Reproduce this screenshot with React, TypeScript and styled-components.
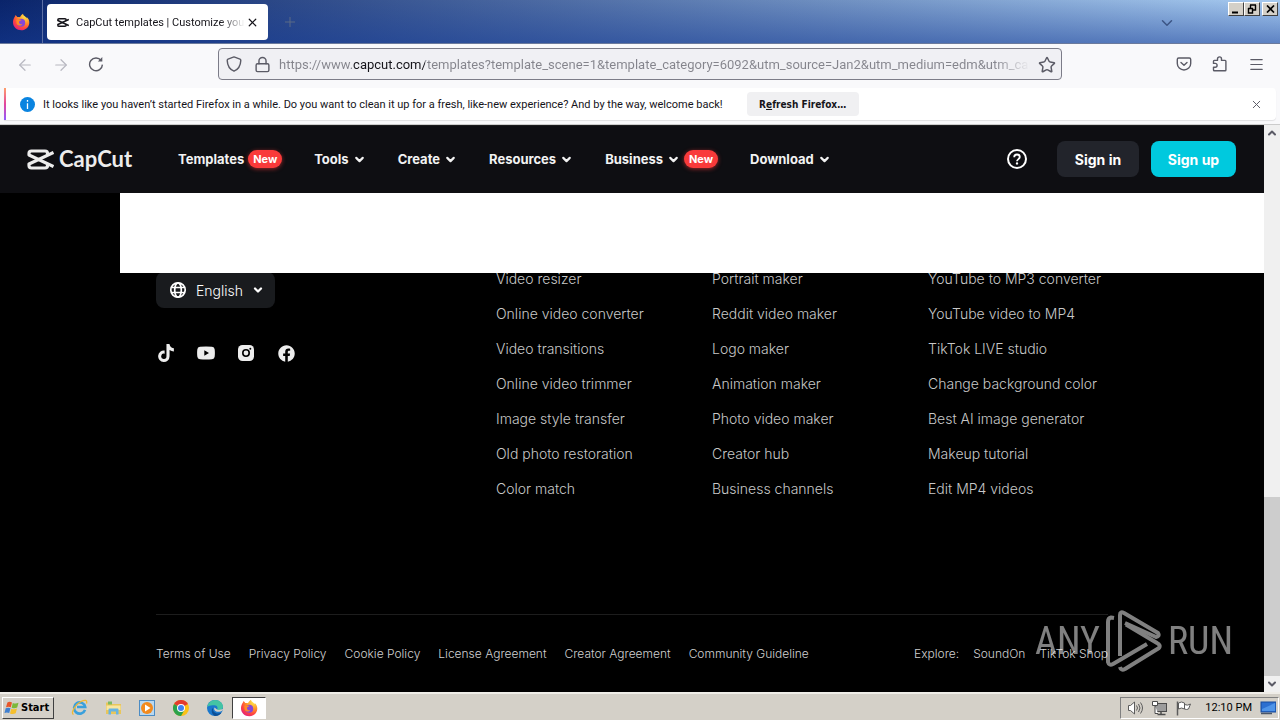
import React from "react";
import styled, { createGlobalStyle, css } from "styled-components";
import { ArrowLeft, ArrowRight, ChevronDown, ChevronUp, Lock, Menu, Plus, Star, X } from "lucide-react";
import { FaFacebook, FaTiktok } from "react-icons/fa";

const ui = `Roboto, "DejaVu Sans Condensed", sans-serif`;
const uiBold = `"DejaVu Sans Condensed", "DejaVu Sans", sans-serif`;
const site = `Inter, "Liberation Sans", sans-serif`;

const Global = createGlobalStyle`
  *, *::before, *::after { box-sizing: border-box; }
  body { margin: 0; background: #000; }
  button, input { font: inherit; color: inherit; border: 0; padding: 0; margin: 0; background: none; }
  button { cursor: pointer; }
  a { color: inherit; text-decoration: none; }
  ul { list-style: none; margin: 0; padding: 0; }
  svg { display: block; flex: none; }
`;

const Screen = styled.div`
  min-height: 100vh;
  display: flex;
  flex-direction: column;
  font-family: ${ui};
`;

/* Browser chrome */

const TitleBar = styled.div`
  height: 44px;
  display: flex;
  border-bottom: 1px solid #6b7a9c;
  background:
    linear-gradient(to bottom, rgba(22, 60, 150, 0) 0%, rgba(22, 60, 150, 0.5) 100%),
    linear-gradient(to right, #0a246a, #a6caf0);
`;

const PinnedTab = styled.button`
  width: 43px;
  display: grid;
  place-items: center;
  border-right: 1px solid #5c6fa5;
`;

const Tab = styled.div`
  width: 221px;
  height: 36px;
  margin: 4px 0 0 4px;
  padding: 0 10px;
  display: flex;
  align-items: center;
  gap: 7px;
  border-radius: 4px;
  background: #fff;
  color: #15141a;
  font-size: 11px;
`;

const TabTitle = styled.span`
  flex: 1;
  margin-right: -6px;
  overflow: hidden;
  white-space: nowrap;
  mask-image: linear-gradient(to right, #000 85%, transparent);
`;

const BarButton = styled.button<{ $color?: string; $size?: number }>`
  width: ${(p) => p.$size ?? 16}px;
  height: ${(p) => p.$size ?? 16}px;
  display: grid;
  place-items: center;
  flex: none;
  color: ${(p) => p.$color ?? "#5b5b66"};
`;

const TitleTools = styled.div`
  flex: 1;
  display: flex;
  align-items: center;
  justify-content: space-between;
  padding: 0 54px 0 14px;
`;

const WindowControls = styled.div`
  display: flex;
  padding: 2px 2px 0 0;
`;

const raised = css`
  background: #d4d0c8;
  border: 1px solid;
  border-color: #fff #404040 #404040 #fff;
`;

const WindowButton = styled.button<{ $gap?: boolean }>`
  ${raised}
  width: 16px;
  height: 14px;
  margin-left: ${(p) => (p.$gap ? 2 : 0)}px;
  display: grid;
  place-items: center;
  color: #000;
`;

const Toolbar = styled.div`
  height: 44px;
  display: flex;
  align-items: center;
  padding: 0 16px 4px;
  background: #f9f9fb;
`;

const ToolGroup = styled.div<{ $gap: number }>`
  display: flex;
  flex: 1;
  align-items: center;
  gap: ${(p) => p.$gap}px;
  &:last-child { justify-content: flex-end; }
`;

const AddressBar = styled.div`
  width: calc(100% - 404px);
  height: 32px;
  display: flex;
  align-items: center;
  gap: 12px;
  padding: 0 7px;
  border: 1px solid #7c7c88;
  border-radius: 4px;
  background: #f0f0f4;
  color: #5b5b66;
`;

const UrlInput = styled.input`
  flex: 1;
  min-width: 0;
  height: 30px;
  margin-left: -3px;
  margin-right: -4px;
  font-size: 13px;
  color: transparent;
  background: linear-gradient(
    to right,
    #84848c 74px,
    #15141a 74px,
    #15141a 146px,
    #84848c 146px,
    #84848c calc(100% - 36px),
    transparent
  );
  background-clip: text;
  -webkit-background-clip: text;
`;

const NoticeArea = styled.div`
  padding: 0 4px 4px;
  border-bottom: 1px solid #ccc;
  background: #f9f9fb;
`;

const Notice = styled.div`
  position: relative;
  height: 32px;
  display: flex;
  align-items: center;
  padding: 0 12px 0 16px;
  border-radius: 0 4px 4px 0;
  overflow: hidden;
  background: #fff;
  color: #15141a;
  font-size: 11px;
  box-shadow: 0 1px 1px rgba(0, 0, 0, 0.1);
  &::before {
    content: "";
    position: absolute;
    inset: 0 auto 0 0;
    width: 2px;
    background: linear-gradient(#ff9f6b, #e3459c 50%, #9059ff);
  }
`;

const NoticeText = styled.span`
  margin: 0 24px 0 8px;
  white-space: nowrap;
`;

const RefreshButton = styled.button`
  width: 112px;
  height: 24px;
  margin-right: auto;
  border-radius: 4px;
  background: #f0f0f2;
  font-family: ${uiBold};
  font-size: 10px;
  font-weight: 700;
`;

/* Web page */

const Viewport = styled.div`
  flex: 1;
  display: flex;
  background: #000;
`;

const Page = styled.div`
  position: relative;
  flex: 1;
  min-width: 0;
  font-family: ${site};
  color: #fff;
`;

const Header = styled.header`
  height: 68px;
  display: flex;
  align-items: center;
  padding: 0 28px 0 27px;
  box-shadow: inset 0 1px #1b1b1c;
  background: #0e0e12;
`;

const Brand = styled.a`
  width: 151px;
  display: flex;
  align-items: center;
  gap: 5px;
  color: #ececec;
  font-family: Lato, sans-serif;
  font-size: 22px;
  line-height: 24px;
  font-weight: 700;
`;

const Nav = styled.nav`
  flex: 1;
  display: flex;
  gap: 32px;
`;

const NavItem = styled.button`
  display: flex;
  align-items: center;
  gap: 4px;
  color: #f2f2f2;
  font-size: 13px;
  line-height: 20px;
  font-weight: 700;
`;

const Badge = styled.span`
  width: 34px;
  height: 18px;
  border-radius: 9px;
  background: #f93a3a;
  box-shadow: 0 1px 4px rgba(249, 58, 58, 0.6);
  color: #fff;
  font-size: 11px;
  line-height: 18px;
  text-align: center;
`;

const Actions = styled.div`
  display: flex;
  align-items: center;
  gap: 12px;
`;

const HelpButton = styled.button`
  margin-right: 18px;
`;

const SignButton = styled.button<{ $primary?: boolean }>`
  width: ${(p) => (p.$primary ? 85 : 82)}px;
  height: 36px;
  border-radius: 8px;
  background: ${(p) => (p.$primary ? "#00c9de" : "#22242b")};
  font-size: 14px;
  font-weight: 700;
`;

const Blank = styled.div`
  position: relative;
  height: 80px;
  margin-left: 120px;
  background: #fff;
`;

const Footer = styled.footer`
  margin: -4px 156px 0;
`;

const FooterTop = styled.div`
  display: grid;
  grid-template-columns: 340px 216px 216px 1fr;
  padding-bottom: 115px;
`;

const FooterBrand = styled.div`
  padding-top: 3px;
`;

const Language = styled.button`
  width: 119px;
  height: 36px;
  display: flex;
  align-items: center;
  gap: 9px;
  padding: 0 13px;
  border-radius: 8px;
  background: #191b1e;
  font-size: 14px;
  font-weight: 300;
`;

const Social = styled.div`
  display: flex;
  gap: 20px;
  margin-top: 35px;
  color: #ededed;
`;

const SocialLink = styled.a`
  width: 20px;
  height: 20px;
  display: grid;
  place-items: center;
`;

const LinkList = styled.ul`
  display: flex;
  flex-direction: column;
  gap: 15px;
  color: #c8c8c8;
  font-size: 14px;
  line-height: 20px;
  font-weight: 300;
  white-space: nowrap;
`;

const Legal = styled.div`
  display: flex;
  justify-content: space-between;
  padding: 29px 0 28px;
  border-top: 1px solid #1d1d1d;
  color: #d0d0d0;
  font-size: 12px;
  line-height: 20px;
  font-weight: 300;
  white-space: nowrap;
`;

const LegalGroup = styled.div<{ $gap: number }>`
  display: flex;
  gap: ${(p) => p.$gap}px;
`;

const Watermark = styled.div`
  position: absolute;
  right: 31px;
  bottom: 20px;
  height: 62px;
  display: flex;
  align-items: center;
  gap: 6px;
  color: #fff;
  opacity: 0.5;
  font-family: "Roboto Condensed", Roboto, sans-serif;
  font-size: 38px;
  font-weight: 400;
`;

const Scrollbar = styled.div`
  width: 16px;
  display: flex;
  flex-direction: column;
  background: #f0f0f0;
`;

const Thumb = styled.div`
  height: 179px;
  margin-top: auto;
  background: #cdcdcd;
`;

/* Desktop taskbar */

const Taskbar = styled.div`
  height: 28px;
  display: flex;
  align-items: center;
  padding: 1px 1px 0 2px;
  border-top: 2px solid #efede8;
  background: #d4d0c8;
  color: #000;
  font-size: 11px;
`;

const StartButton = styled.button`
  ${raised}
  width: 52px;
  height: 22px;
  display: flex;
  align-items: center;
  gap: 1px;
  padding-left: 1px;
  margin-right: 8px;
  font-family: ${uiBold};
  font-weight: 700;
`;

const Launcher = styled.button<{ $active?: boolean }>`
  width: 34px;
  height: 22px;
  display: grid;
  place-items: center;
  ${(p) =>
    p.$active &&
    css`
      background: #fff;
      border: 1px solid;
      border-color: #404040 #fff #fff #404040;
    `}
`;

const Tray = styled.div`
  height: 22px;
  margin-left: auto;
  display: flex;
  align-items: center;
  gap: 8px;
  padding: 0 2px 0 6px;
  border: 1px solid;
  border-color: #808080 #fff #fff #808080;
`;

const Clock = styled.span`
  margin-left: 5px;
`;

/* Drawings */

function FirefoxIcon({ id }: { id: string }) {
  return (
    <svg width="18" height="18" viewBox="0 0 18 18">
      <defs>
        <radialGradient id={id} cx="0.75" cy="0.15" r="0.95">
          <stop offset="0" stopColor="#ffe64a" />
          <stop offset="0.45" stopColor="#ff9228" />
          <stop offset="0.75" stopColor="#ff4440" />
          <stop offset="1" stopColor="#e02080" />
        </radialGradient>
      </defs>
      <path
        d="M2.4 4.2C3 3.5 3.3 2.8 3.4 2 4.3 2.6 4.9 3.3 5.3 4.1 6.2 3.9 7.2 3.9 8 4.2 8.6 2.8 9.6 1.6 11 .8c.2 1.4 1.200 2 2.400 2.900.6.5 1 1 1.300 1.600.1-.4 0-.9-.1-1.300C16.500 5.400 17.400 7.600 17.300 10 17 14.200 13.600 17.300 9.300 17.300 4.700 17.300 1 13.800 1 9.300 1 7.400 1.500 5.700 2.400 4.200z"
        fill={`url(#${id})`}
      />
      <circle cx="9.200" cy="9.800" r="4" fill="#8547d8" />
      <path d="M4.300 7C6 5.800 8 6 9.600 7.300 8.300 7.400 7.600 8 7 8.700 6.900 10.800 8.600 11.600 10.300 11.200 9.400 13.200 5.600 13.200 4.600 10.500z" fill="#ff8a26" />
    </svg>
  );
}

function CapCutMark({ width, height, stroke }: { width: number; height: number; stroke: number }) {
  return (
    <svg width={width} height={height} viewBox="0 0 27 21" fill="none" stroke="currentColor" strokeWidth={stroke} strokeLinejoin="round">
      <path d="M26.500 3.500 2 15V16.500Q2 19 4.500 19H18Q20.500 19 20.500 16.800V14" />
      <path d="M26.500 17.500 2 6V4.500Q2 2 4.500 2H18Q20.500 2 20.500 4.200V7" />
    </svg>
  );
}

function ReloadIcon() {
  return (
    <svg width="16" height="16" viewBox="0 0 16 16" fill="none" stroke="currentColor" strokeWidth="1.400">
      <path d="M13.200 4.600A6.400 6.400 0 1 0 14.400 8.600" />
      <path d="M14.300 1v4.600H9.800z" fill="currentColor" stroke="none" />
    </svg>
  );
}

function ShieldIcon() {
  return (
    <svg width="16" height="16" viewBox="0 0 16 16" fill="none" stroke="currentColor" strokeWidth="1.400" strokeLinejoin="round">
      <path d="M8 .9 14 3.200C14.600 3.500 14.800 3.800 14.800 4.400 14.600 9.500 12.800 13.200 8 15.200 3.200 13.200 1.400 9.500 1.200 4.400 1.200 3.800 1.400 3.500 2 3.200z" />
    </svg>
  );
}

function PocketIcon() {
  return (
    <svg width="16" height="16" viewBox="0 0 16 16" fill="none" stroke="currentColor" strokeWidth="1.400" strokeLinecap="round" strokeLinejoin="round">
      <path d="M2.700 2h10.600c.8 0 1.400.6 1.400 1.400v4C14.700 11 11.700 14 8 14S1.300 11 1.300 7.400v-4C1.300 2.600 1.900 2 2.700 2z" />
      <path d="M5 6.500 8 9.300l3-2.800" />
    </svg>
  );
}

function ExtensionIcon() {
  return (
    <svg width="16" height="16" viewBox="0 0 16 16" fill="none" stroke="currentColor" strokeWidth="1.400" strokeLinejoin="round">
      <path d="M2.300 14.700q-.8 0-.8-.8v-2.700h1.700a1.900 1.900 0 0 0 0-3.800H1.500V5.200q0-.8.8-.8h3.200V2.900a2 2 0 0 1 4 0v1.500h3.600q.8 0 .8.8v8.700q0 .8-.8.8z" />
    </svg>
  );
}

function InfoIcon() {
  return (
    <svg width="15" height="15" viewBox="0 0 15 15">
      <circle cx="7.500" cy="7.500" r="7.500" fill="#0a84e0" />
      <path d="M7.500 3v1.700M7.500 6.200V12" stroke="#fff" strokeWidth="1.300" />
    </svg>
  );
}

function HelpIcon() {
  return (
    <svg width="20" height="20" viewBox="0 0 20 20" fill="none" stroke="currentColor" strokeWidth="2">
      <circle cx="10" cy="10" r="9" />
      <path d="M7.200 8.200C7.200 6.500 8.400 5.500 10 5.500s2.800 1 2.800 2.500c0 2-2.800 2.200-2.800 4.300" strokeWidth="1.800" />
      <circle cx="10" cy="14.400" r="1.200" fill="currentColor" stroke="none" />
    </svg>
  );
}

function GlobeIcon() {
  return (
    <svg width="18" height="18" viewBox="0 0 18 18" fill="none" stroke="currentColor" strokeWidth="1.700">
      <circle cx="9" cy="9" r="7.200" />
      <ellipse cx="9" cy="9" rx="3.300" ry="7.200" />
      <path d="M2.300 6.500h13.400M2.300 11.500h13.400" />
    </svg>
  );
}

function YoutubeIcon() {
  return (
    <svg width="18" height="14" viewBox="0 0 18 14">
      <path fillRule="evenodd" d="M3 .8Q9 0 15 .8 17.500 1 17.700 3.500q.4 3.500 0 7-.2 2.500-2.700 2.700-6 .6-12 0Q.5 13 .3 10.500q-.4-3.500 0-7Q.5 1 3 .8zM7.300 4.200v5.600L12 7z" fill="currentColor" />
    </svg>
  );
}

function InstagramIcon() {
  return (
    <svg width="16" height="16" viewBox="0 0 16 16">
      <rect width="16" height="16" rx="4.500" fill="currentColor" />
      <circle cx="8" cy="8" r="3.200" fill="none" stroke="#000" strokeWidth="1.600" />
      <circle cx="12.300" cy="3.800" r="1" fill="#000" />
    </svg>
  );
}

function PlayMark() {
  return (
    <svg width="56" height="62" viewBox="0 0 56 62" fill="none" stroke="currentColor" strokeWidth="4" strokeLinejoin="round">
      <path d="M8 8 5 7.500Q2 8 2 12V52Q3 56 7 54L41 34" />
      <path d="M14 46V5Q14 1 18 3L52 23Q54 26 50 27L19 13" />
      <path d="M14 57Q15 61 19 59L53 38Q55 35 51 33L20 14.500" />
    </svg>
  );
}

function WindowsFlag() {
  return (
    <svg width="16" height="16" viewBox="0 0 16 16">
      <path d="M3.400 2.500Q5.500 1 8 2.500L6.800 7.300Q4.500 6 2 7.300z" fill="#e8562a" />
      <path d="M8.800 3Q11.500 4.300 14.500 2.800L13.200 7.600Q10.500 9 7.600 7.700z" fill="#7cb83a" />
      <path d="M1.700 8.300Q4.200 7 6.500 8.300L5.200 13Q3 11.800.5 13z" fill="#3f7fd0" />
      <path d="M7.300 8.700Q10 10 13 8.600L11.700 13.300Q8.800 14.800 6 13.500z" fill="#f5bf2c" />
    </svg>
  );
}

function ExplorerIcon() {
  return (
    <svg width="17" height="17" viewBox="0 0 17 17" fill="none">
      <path d="M14 10.800A5.600 5.600 0 1 1 14.200 8H6" stroke="#3aa0dc" strokeWidth="2.600" />
      <path d="M2.500 15.500C-1 14 5 5 10 2.500 14 .5 16.500 1 15.500 4.500" stroke="#f0b932" strokeWidth="1.300" />
    </svg>
  );
}

function FolderIcon() {
  return (
    <svg width="17" height="16" viewBox="0 0 17 16">
      <path d="M1 2.500h5l1 1.500h9v10H1z" fill="#e9c65b" />
      <path d="M3 1.500h4v3H3z" fill="#7cba62" />
      <path d="M1.500 5.500h14V10h-14z" fill="#f8e6a0" />
      <path d="M3.500 14.500V9.500q0-1 1-1h8q1 0 1 1v5h-2.500v-3h-5v3z" fill="#67b4e4" />
    </svg>
  );
}

function MediaIcon() {
  return (
    <svg width="16" height="16" viewBox="0 0 16 16">
      <rect x=".5" y=".5" width="15" height="15" fill="#b9d8f0" stroke="#4c8cc4" />
      <circle cx="8" cy="8" r="6" fill="#f28a1e" />
      <path d="M6 4.500v7L11.500 8z" fill="#fff" />
    </svg>
  );
}

function ChromeIcon() {
  return (
    <svg width="16" height="16" viewBox="0 0 16 16">
      <circle cx="8" cy="8" r="8" fill="#fbc116" />
      <path d="M8 8 1.070 4A8 8 0 0 1 14.930 4z" fill="#e33b2e" />
      <path d="M8 8 1.070 4A8 8 0 0 0 8 16l3.500-6z" fill="#2ba24c" />
      <circle cx="8" cy="8" r="4" fill="#fff" />
      <circle cx="8" cy="8" r="3" fill="#3f82f0" />
    </svg>
  );
}

function EdgeIcon() {
  return (
    <svg width="16" height="16" viewBox="0 0 16 16">
      <circle cx="8" cy="8" r="8" fill="#1b78cc" />
      <path d="M.2 7C1 3 4 0 8 0c5 0 8 3.500 8 6.800 0 3-3.500 4.500-6 3 1.200-1.500.5-4.300-2.500-4.500C4.500 4.800 1.500 5.500.2 7z" fill="#44c4a4" />
      <path d="M6 8c-.8 3 2 5.500 5 5.500 1.500 0 3-.6 3.800-1.200C13.500 14.500 11 16 8 16 5 15 3.500 9.500 6 8z" fill="#0d4f96" />
      <path d="M7.500 7.500c-1 2 .5 4.300 4 4.300 1.500 0 3-.5 4-1.300.3-.6.4-1 .5-1.700-2 1.300-5 1.300-6 .8z" fill="#d4d0c8" />
    </svg>
  );
}

function SpeakerIcon() {
  return (
    <svg width="16" height="16" viewBox="0 0 16 16" fill="none" stroke="#5c5c5c">
      <path d="M1.500 5.500h2L7.500 2v12L3.500 10.500h-2z" fill="#fff" />
      <path d="M9.500 5.500q2 2.500 0 5M11.500 4q3 4 0 8M13.500 2.500q4 5.500 0 11" />
    </svg>
  );
}

function NetworkIcon() {
  return (
    <svg width="17" height="16" viewBox="0 0 17 16" fill="none" stroke="#4c4c4c">
      <rect x="4.500" y="3.500" width="11" height="8" fill="#9c9c9c" />
      <path d="M10 12v2M6.500 14.500h8" strokeWidth="1.500" />
      <path d="M1.500 1.500h5v4h-5zM4 5.500v8h3" fill="#fff" />
    </svg>
  );
}

function FlagIcon() {
  return (
    <svg width="16" height="16" viewBox="0 0 16 16" fill="none" stroke="#5c5c5c">
      <path d="M2.500 3q3-2 6 0v6q-3-2-6 0zM8.500 4.500q3 1.500 6-.5l-2 5q-2 1-4 0z" fill="#fff" />
      <path d="M1.500 1.500v14" strokeWidth="1.500" />
    </svg>
  );
}

function DesktopIcon() {
  return (
    <svg width="16" height="14" viewBox="0 0 16 14">
      <rect x="1" y="1" width="15" height="10" fill="#2d6fd0" stroke="#174a9c" />
      <path d="M2 8 15 2v8H2z" fill="#4f94e8" />
      <path d="M1 12.500h11" stroke="#4a5668" strokeWidth="1.500" />
    </svg>
  );
}

/* Content */

const navItems = [
  { label: "Templates", menu: false, isNew: true },
  { label: "Tools", menu: true, isNew: false },
  { label: "Create", menu: true, isNew: false },
  { label: "Resources", menu: true, isNew: false },
  { label: "Business", menu: true, isNew: true },
  { label: "Download", menu: true, isNew: false },
];

const columns = [
  ["Video resizer", "Online video converter", "Video transitions", "Online video trimmer", "Image style transfer", "Old photo restoration", "Color match"],
  ["Portrait maker", "Reddit video maker", "Logo maker", "Animation maker", "Photo video maker", "Creator hub", "Business channels"],
  ["YouTube to MP3 converter", "YouTube video to MP4", "TikTok LIVE studio", "Change background color", "Best AI image generator", "Makeup tutorial", "Edit MP4 videos"],
];

const legal = ["Terms of Use", "Privacy Policy", "Cookie Policy", "License Agreement", "Creator Agreement", "Community Guideline"];

const url =
  "https://www.capcut.com/templates?template_scene=1&template_category=6092&utm_source=Jan2&utm_medium=edm&utm_campaign=newsletter";

export default function App() {
  return (
    <Screen>
      <Global />
      <TitleBar>
        <PinnedTab aria-label="Firefox View"><FirefoxIcon id="fx-tab" /></PinnedTab>
        <Tab>
          <CapCutMark width={12} height={11} stroke={3.5} />
          <TabTitle>CapCut templates | Customize your videos</TabTitle>
          <BarButton $color="#15141a" $size={12} aria-label="Close tab"><X size={13} strokeWidth={2.2} /></BarButton>
        </Tab>
        <TitleTools>
          <BarButton $color="#5b6b86" aria-label="New tab"><Plus size={16} strokeWidth={1.5} /></BarButton>
          <BarButton $color="#3c5585" aria-label="List all tabs"><ChevronDown size={18} strokeWidth={2} /></BarButton>
        </TitleTools>
        <WindowControls>
          <WindowButton aria-label="Minimize">
            <svg width="10" height="9"><path d="M1 7.500h6" stroke="currentColor" strokeWidth="2" /></svg>
          </WindowButton>
          <WindowButton aria-label="Restore">
            <svg width="10" height="10" fill="none" stroke="currentColor"><path d="M3 1h6M3.500 1v3M8.500 1v5H6M1 4.500h5M1.500 4v5h4V4" strokeWidth="1.400" /></svg>
          </WindowButton>
          <WindowButton $gap aria-label="Close">
            <svg width="9" height="8" stroke="currentColor" strokeWidth="1.700"><path d="M1 .5l7 7M8 .5l-7 7" /></svg>
          </WindowButton>
        </WindowControls>
      </TitleBar>

      <Toolbar>
        <ToolGroup $gap={20}>
          <BarButton $color="#b8b8c0" aria-label="Back"><ArrowLeft size={18} strokeWidth={1.6} /></BarButton>
          <BarButton $color="#b8b8c0" aria-label="Forward"><ArrowRight size={18} strokeWidth={1.6} /></BarButton>
          <BarButton aria-label="Reload"><ReloadIcon /></BarButton>
        </ToolGroup>
        <AddressBar>
          <BarButton aria-label="Tracking protection"><ShieldIcon /></BarButton>
          <BarButton aria-label="Site information"><Lock size={17} strokeWidth={2} /></BarButton>
          <UrlInput aria-label="Address" defaultValue={url} />
          <BarButton aria-label="Bookmark this page"><Star size={18} strokeWidth={2} /></BarButton>
        </AddressBar>
        <ToolGroup $gap={20}>
          <BarButton aria-label="Save to Pocket"><PocketIcon /></BarButton>
          <BarButton aria-label="Extensions"><ExtensionIcon /></BarButton>
          <BarButton aria-label="Application menu"><Menu size={17} strokeWidth={1.7} /></BarButton>
        </ToolGroup>
      </Toolbar>

      <NoticeArea>
        <Notice>
          <InfoIcon />
          <NoticeText>
            It looks like you haven’t started Firefox in a while. Do you want to clean it up for a fresh, like-new experience? And by the way, welcome back!
          </NoticeText>
          <RefreshButton>R<u>e</u>fresh Firefox…</RefreshButton>
          <BarButton aria-label="Dismiss"><X size={13} strokeWidth={1.8} /></BarButton>
        </Notice>
      </NoticeArea>

      <Viewport>
        <Page>
          <Header>
            <Brand href="#home"><CapCutMark width={27} height={21} stroke={3.2} />CapCut</Brand>
            <Nav>
              {navItems.map((item) => (
                <NavItem key={item.label}>
                  {item.label}
                  {item.menu && <ChevronDown size={13} strokeWidth={4} />}
                  {item.isNew && <Badge>New</Badge>}
                </NavItem>
              ))}
            </Nav>
            <Actions>
              <HelpButton aria-label="Help"><HelpIcon /></HelpButton>
              <SignButton>Sign in</SignButton>
              <SignButton $primary>Sign up</SignButton>
            </Actions>
          </Header>
          <Blank />
          <Footer>
            <FooterTop>
              <FooterBrand>
                <Language><GlobeIcon />English<ChevronDown size={12} strokeWidth={4.5} /></Language>
                <Social>
                  <SocialLink href="#tiktok" aria-label="TikTok"><FaTiktok size={18} /></SocialLink>
                  <SocialLink href="#youtube" aria-label="YouTube"><YoutubeIcon /></SocialLink>
                  <SocialLink href="#instagram" aria-label="Instagram"><InstagramIcon /></SocialLink>
                  <SocialLink href="#facebook" aria-label="Facebook"><FaFacebook size={17} /></SocialLink>
                </Social>
              </FooterBrand>
              {columns.map((links) => (
                <LinkList key={links[0]}>
                  {links.map((link) => (
                    <li key={link}><a href="#tools">{link}</a></li>
                  ))}
                </LinkList>
              ))}
            </FooterTop>
            <Legal>
              <LegalGroup $gap={18}>
                {legal.map((link) => <a key={link} href="#legal">{link}</a>)}
              </LegalGroup>
              <LegalGroup $gap={14}>
                <span>Explore:</span>
                <a href="#soundon">SoundOn</a>
                <a href="#shop">TikTok Shop</a>
              </LegalGroup>
            </Legal>
          </Footer>
          <Watermark><span>ANY</span><PlayMark /><span>RUN</span></Watermark>
        </Page>
        <Scrollbar>
          <BarButton aria-label="Scroll up"><ChevronUp size={12} strokeWidth={4} /></BarButton>
          <Thumb />
          <BarButton aria-label="Scroll down"><ChevronDown size={12} strokeWidth={4} /></BarButton>
        </Scrollbar>
      </Viewport>

      <Taskbar>
        <StartButton><WindowsFlag />Start</StartButton>
        <Launcher aria-label="Internet Explorer"><ExplorerIcon /></Launcher>
        <Launcher aria-label="File Explorer"><FolderIcon /></Launcher>
        <Launcher aria-label="Media Player"><MediaIcon /></Launcher>
        <Launcher aria-label="Chrome"><ChromeIcon /></Launcher>
        <Launcher aria-label="Edge"><EdgeIcon /></Launcher>
        <Launcher $active aria-label="Firefox"><FirefoxIcon id="fx-task" /></Launcher>
        <Tray>
          <SpeakerIcon />
          <NetworkIcon />
          <FlagIcon />
          <Clock>12:10 PM</Clock>
          <DesktopIcon />
        </Tray>
      </Taskbar>
    </Screen>
  );
}
